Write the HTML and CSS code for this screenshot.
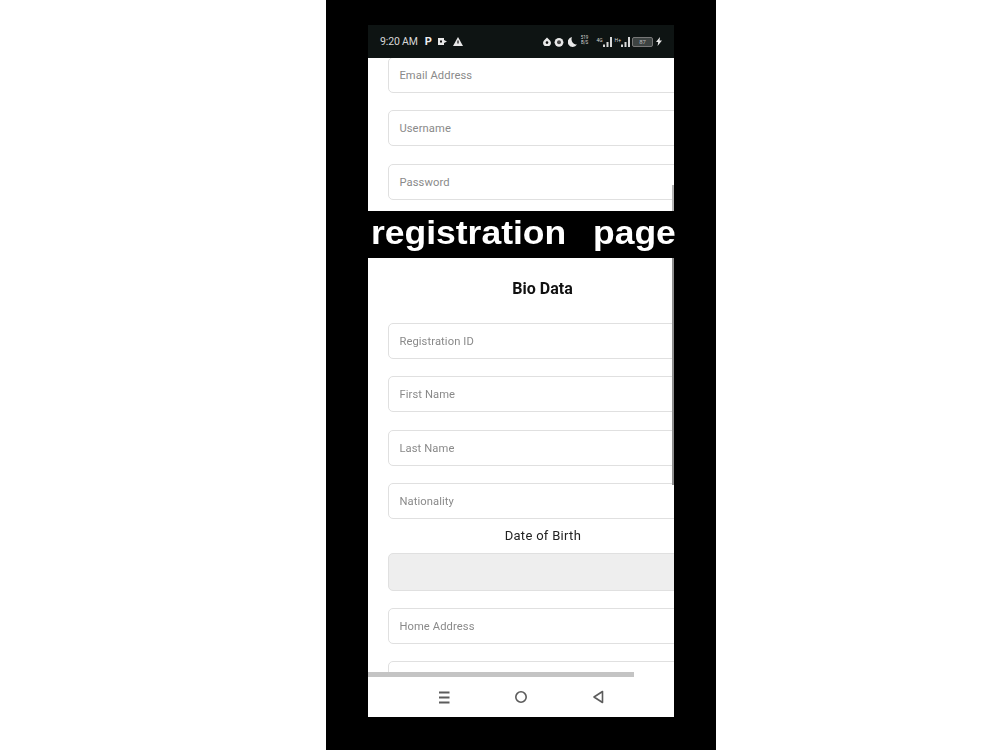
FILE: index.html
```html
<!DOCTYPE html>
<html lang="en">
<head>
<meta charset="utf-8">
<title>Registration page</title>
<link rel="stylesheet" href="styles.css">
</head>
<body>
<main class="phone">
  <div class="screen">
    <header class="status">
      <div class="status-left">
        <span class="time">9:20 AM</span>
        <span class="p-icon">P</span>
        <svg width="9" height="7" viewBox="0 0 9 7"><path d="M0 0h6v2l3 1.5L6 5v2H0z" fill="#e8e8e8"/><rect x="2" y="2.5" width="2" height="2" fill="#111"/></svg>
        <svg width="10" height="9" viewBox="0 0 10 9"><path d="M5 0l5 9H0z" fill="#e8e8e8"/><rect x="4.4" y="3.5" width="1.2" height="3" fill="#111"/></svg>
      </div>
      <div class="status-right">
        <svg width="8" height="9" viewBox="0 0 8 9"><path d="M4 0.5L7 3.5a3.8 3.8 0 1 1-6 0z" fill="#e8e8e8"/><circle cx="4" cy="5.6" r="1.3" fill="#111"/></svg>
        <svg class="s-alarm" width="10" height="10" viewBox="0 0 10 10"><circle cx="5" cy="5.3" r="4.4" fill="#e8e8e8"/><circle cx="5" cy="5.3" r="2" fill="#444"/></svg>
        <svg class="s-moon" width="9" height="10" viewBox="0 0 9 10"><path d="M4 0a5 5 0 1 0 5 7.6A5.4 5.4 0 0 1 4 0z" fill="#e8e8e8"/></svg>
        <span class="speed">519<br>B/S</span>
        <span class="net">4G</span>
        <svg width="9" height="10" viewBox="0 0 9 10"><path d="M0 10V7.5h2V10zM3.5 10V5h2v5zM7 10V0h2v10z" fill="#d8d8d8"/></svg>
        <span class="net net-gap">H+</span>
        <svg width="9" height="10" viewBox="0 0 9 10"><path d="M0 10V7.5h2V10zM3.5 10V5h2v5zM7 10V0h2v10z" fill="#d8d8d8"/></svg>
        <span class="battery">87</span>
        <svg class="s-bolt" width="6" height="9" viewBox="0 0 6 9"><path d="M4 0L0 5h2.2L1.6 9 6 3.6H3.6z" fill="#e8e8e8"/></svg>
      </div>
    </header>

    <section class="panel panel-top">
      <div class="field field-first">Email Address</div>
      <div class="field">Username</div>
      <div class="field">Password</div>
      <span class="vbar vbar-top"></span>
    </section>

    <div class="banner"><div class="banner-text"><span>registration</span><span>page</span></div></div>

    <section class="panel panel-bottom">
      <h1 class="title">Bio Data</h1>
      <div class="field">Registration ID</div>
      <div class="field">First Name</div>
      <div class="field">Last Name</div>
      <div class="field">Nationality</div>
      <div class="dob-label">Date of Birth</div>
      <div class="dob"></div>
      <div class="field">Home Address</div>
      <div class="field"></div>
      <span class="vbar vbar-bottom"></span>
      <span class="hbar"></span>
    </section>

    <nav class="navbar">
      <svg width="14" height="13" viewBox="0 0 14 13"><path d="M2 1.5h10.5M2 6.5h10.5M2 11.5h10.5" stroke="#5c5c5c" stroke-width="2" fill="none"/></svg>
      <svg width="14" height="14" viewBox="0 0 14 14"><circle cx="7" cy="7" r="5.2" stroke="#5c5c5c" stroke-width="1.6" fill="none"/></svg>
      <svg width="12" height="14" viewBox="0 0 12 14"><path d="M10.5 1.5v11L2 7z" stroke="#5c5c5c" stroke-width="1.6" fill="none" stroke-linejoin="round"/></svg>
    </nav>
  </div>
</main>
</body>
</html>
```
FILE: styles.css
```css
* { box-sizing: border-box; }
html, body { margin: 0; height: 100%; }
body {
  background: #fff;
  width: 1000px;
  height: 750px;
  overflow: hidden;
  font-family: "Roboto", "Liberation Sans", sans-serif;
}
.phone {
  width: 390px;
  height: 750px;
  margin-left: 326px;
  padding: 25px 42px 0;
  background: #000;
}
.screen {
  width: 306px;
  height: 692px;
  display: flex;
  flex-direction: column;
  filter: blur(0.45px);
}
.status {
  height: 33px;
  flex: none;
  background: #0e1413;
  display: flex;
  align-items: center;
  justify-content: space-between;
  padding: 0 12px;
  color: #d8d8d8;
}
.status-left, .status-right { display: flex; align-items: center; }
.status-left { gap: 6px; }
.status-right { gap: 2px; }
.time { font-size: 10.5px; letter-spacing: -0.15px; margin-right: 1px; }
.p-icon { font-size: 11px; font-weight: 700; color: #eee; }
.s-alarm { margin-left: 1px; }
.s-moon { margin-left: 2px; }
.speed { font-size: 4.5px; line-height: 5px; text-align: center; margin: 0 6px 3px 2px; }
.net { font-size: 5px; margin-top: -4px; margin-right: -2px; }
.net-gap { margin-left: 1px; }
.battery {
  width: 21px;
  height: 10px;
  background: #3d4342;
  border: 1px solid #777;
  border-radius: 2px;
  font-size: 6px;
  line-height: 8px;
  text-align: center;
  color: #bbb;
}
.s-bolt { margin-left: 1px; }
.panel {
  position: relative;
  background: #fff;
  overflow: hidden;
  flex: none;
}
.panel-top { height: 153px; padding-left: 20.4px; }
.panel-bottom { height: 419px; padding-left: 20.4px; }
.field {
  height: 36px;
  margin-bottom: 17.4px;
  padding-left: 10px;
  width: 320px;
  border: 1px solid #e0e0e0;
  border-radius: 5px;
  background: #fff;
  font-size: 11.2px;
  line-height: 35px;
  color: #8a8a8a;
  letter-spacing: 0.1px;
}
.field-first { margin-top: -1px; }
.banner {
  height: 47px;
  flex: none;
  padding-left: 3px;
  display: flex;
  align-items: center;
  background: #000;
}
.banner-text {
  display: flex;
  gap: 25px;
  flex: none;
  color: #fff;
  font-family: "Liberation Sans", Arial, sans-serif;
  font-weight: 700;
  font-size: 33px;
  line-height: 40px;
  transform: translateY(-2px) scaleX(1.075);
  transform-origin: left center;
}
.title {
  margin: 21px 0 0 -20.4px;
  height: 44px;
  width: 349px;
  font-size: 16px;
  line-height: 20px;
  font-weight: 700;
  color: #111;
  text-align: center;
}
.dob-label {
  margin-top: -10px;
  padding-left: 3px;
  height: 26px;
  text-align: center;
  width: 306px;
  font-size: 13px;
  line-height: 17px;
  color: #222;
  letter-spacing: 0.3px;
}
.dob {
  height: 38px;
  width: 320px;
  margin-bottom: 17px;
  background: #eeeeee;
  border: 1px solid #e0e0e0;
  border-radius: 5px;
}
.vbar { position: absolute; right: 0; width: 2px; }
.vbar-top { top: 127px; height: 26px; background: #b5b5b5; }
.vbar-bottom { top: 0; height: 227px; background: #8f8f8f; }
.hbar { position: absolute; left: 0; top: 414px; width: 266px; height: 5px; background: #c4c4c4; }
.navbar {
  height: 40px;
  flex: none;
  background: #fff;
  display: grid;
  grid-template-columns: repeat(3, 77px);
  padding-left: 37px;
  align-items: center;
  justify-items: center;
}
```
